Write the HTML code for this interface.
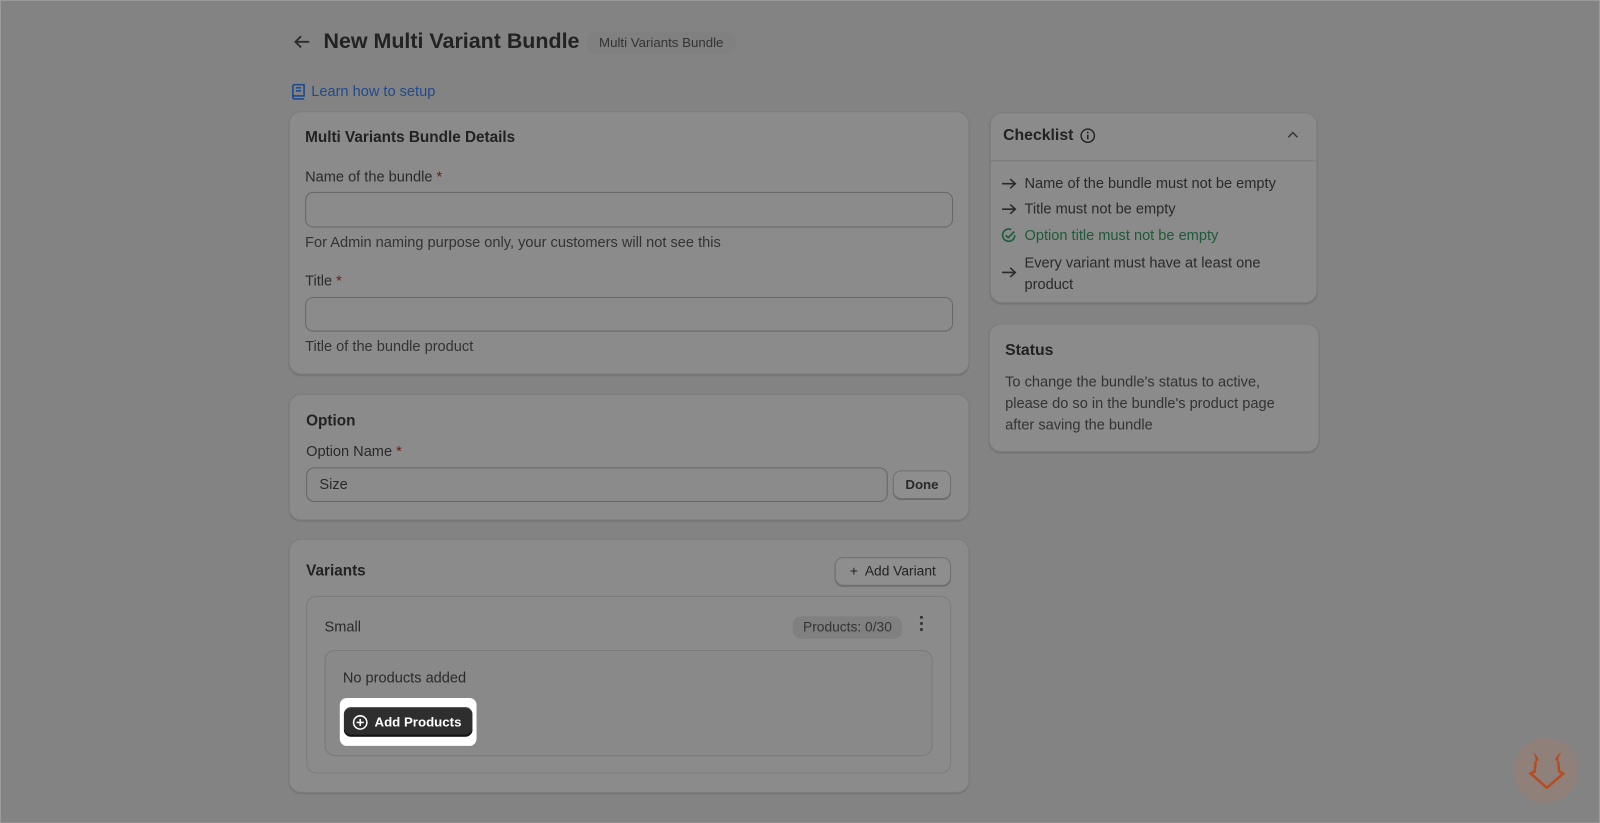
<!DOCTYPE html>
<html><head><meta charset="utf-8"><style>
html,body{margin:0;padding:0;background:#838383;width:1600px;height:823px;overflow:hidden}
#w{position:absolute;left:0;top:0;width:1568px;height:807px;transform:scale(1.02041);transform-origin:0 0;font-family:"Liberation Sans",sans-serif;color:#2a2a2a;font-size:14px}
.a{position:absolute}
.card{position:absolute;background:#8b8b8b;border:1px solid #7c7c7c;border-radius:12px;box-shadow:0 1px 1px rgba(0,0,0,.12)}
.b{font-weight:bold;color:#222}
.inp{position:absolute;border:1px solid #666;border-radius:8px;background:#8b8b8b}
.btn{position:absolute;border:1px solid #6f6f6f;border-radius:8px;background:#8e8e8e;box-shadow:0 1px 0 #6a6a6a;font-size:13px;font-weight:bold;color:#2a2a2a;text-align:center;box-sizing:border-box}
.req{color:#6b1c12}
.sec{color:#333}
</style></head><body><div id="w">
<div class="a" style="left:0;top:0;width:1566px;height:805px;border:1px solid #9a9a9a"></div>
<svg class="a" style="left:288px;top:34px" width="16" height="14" viewBox="0 0 16 14"><path d="M15 7H2M7 1.5L1.5 7 7 12.5" fill="none" stroke="#2a2a2a" stroke-width="1.8"/></svg>
<div class="a b" style="left:317px;top:29px;font-size:21px">New Multi Variant Bundle</div>
<div class="a" style="left:575px;top:31px;width:146px;height:22px;border-radius:8px;background:#808080;font-size:13px;color:#333;text-align:center;line-height:22px">Multi Variants Bundle</div>
<svg class="a" style="left:285px;top:82px" width="15" height="16" viewBox="0 0 15 16"><path d="M2 14V2.5A1.5 1.5 0 0 1 3.5 1H13v11H3.5A1.5 1.5 0 0 0 2 13.5 1.5 1.5 0 0 0 3.5 15H13M5 4h5M5 7h5" fill="none" stroke="#1f4a8c" stroke-width="1.6"/></svg>
<div class="a" style="left:305px;top:82px;color:#1f4a8c;font-size:14.3px">Learn how to setup</div>

<div class="card" style="left:283px;top:109px;width:665px;height:256px"></div>
<div class="a b" style="left:299px;top:126px;font-size:15px">Multi Variants Bundle Details</div>
<div class="a" style="left:299px;top:166px;font-size:14.3px">Name of the bundle <span class="req">*</span></div>
<div class="inp" style="left:299px;top:188px;width:633px;height:33px"></div>
<div class="a sec" style="left:299px;top:230px;font-size:14.3px">For Admin naming purpose only, your customers will not see this</div>
<div class="a" style="left:299px;top:268px;font-size:14.3px">Title <span class="req">*</span></div>
<div class="inp" style="left:299px;top:291px;width:633px;height:32px"></div>
<div class="a sec" style="left:299px;top:332px;font-size:14.3px">Title of the bundle product</div>

<div class="card" style="left:283px;top:386px;width:665px;height:122px"></div>
<div class="a b" style="left:300px;top:404px;font-size:15px">Option</div>
<div class="a" style="left:300px;top:435px;font-size:14.3px">Option Name <span class="req">*</span></div>
<div class="inp" style="left:300px;top:458px;width:568px;height:32px"></div>
<div class="a" style="left:313px;top:467px;font-size:14.3px">Size</div>
<div class="btn" style="left:875px;top:461px;width:57px;height:28px;line-height:26px">Done</div>

<div class="card" style="left:283px;top:528px;width:665px;height:247px"></div>
<div class="a b" style="left:300px;top:551px;font-size:15px">Variants</div>
<div class="btn" style="left:818px;top:546px;width:114px;height:28px;line-height:26px;font-weight:normal;color:#222;font-size:13.5px">+&nbsp; Add Variant</div>
<div class="a" style="left:300px;top:584px;width:630px;height:172px;border:1px solid #7c7c7c;border-radius:10px"></div>
<div class="a" style="left:318px;top:607px;font-size:14.3px">Small</div>
<div class="a" style="left:777px;top:604px;width:107px;height:22px;border-radius:8px;background:#808080;font-size:13.5px;color:#333;text-align:center;line-height:22px">Products: 0/30</div>
<svg class="a" style="left:900px;top:603px" width="6" height="16"><circle cx="3" cy="2" r="1.5" fill="#333"/><circle cx="3" cy="8" r="1.5" fill="#333"/><circle cx="3" cy="14" r="1.5" fill="#333"/></svg>
<div class="a" style="left:318px;top:637px;width:594px;height:102px;border:1px solid #7a7a7a;border-radius:10px;background:#898989"></div>
<div class="a" style="left:336px;top:657px;font-size:14.3px">No products added</div>
<div class="a" style="left:333px;top:684px;width:134px;height:47px;background:#fff;border-radius:7px"></div>
<div class="a" style="left:337px;top:693px;width:126px;height:29px;background:#2e2e2e;border-radius:7px;box-shadow:inset 0 -2px 0 #111,inset 0 1px 0 #555"></div>
<svg class="a" style="left:345px;top:700px" width="16" height="16" viewBox="0 0 16 16"><circle cx="8" cy="8" r="6.5" fill="none" stroke="#fff" stroke-width="1.5"/><path d="M8 4.5v7M4.5 8h7" stroke="#fff" stroke-width="1.5"/></svg>
<div class="a" style="left:367px;top:700px;color:#fff;font-size:13px;font-weight:bold">Add Products</div>

<div class="card" style="left:970px;top:110px;width:319px;height:185px"></div>
<div class="a b" style="left:983px;top:124px;font-size:15.5px">Checklist</div>
<svg class="a" style="left:1058px;top:125px" width="16" height="16" viewBox="0 0 16 16"><circle cx="8" cy="8" r="6.5" fill="none" stroke="#222" stroke-width="1.4"/><path d="M8 7v4.5" stroke="#222" stroke-width="1.5"/><circle cx="8" cy="4.8" r="0.9" fill="#222"/></svg>
<svg class="a" style="left:1261px;top:128px" width="12" height="8"><path d="M1.5 6.5L6 2l4.5 4.5" fill="none" stroke="#333" stroke-width="1.4"/></svg>
<div class="a" style="left:971px;top:157px;width:319px;height:1px;background:#7a7a7a"></div>
<svg class="a" style="left:981px;top:174px" width="16" height="12" viewBox="0 0 16 12"><path d="M1 6h13M9 1.5L14 6 9 10.5" fill="none" stroke="#2a2a2a" stroke-width="1.5"/></svg>
<div class="a" style="left:1004px;top:172px;font-size:14.3px">Name of the bundle must not be empty</div>
<svg class="a" style="left:981px;top:199px" width="16" height="12" viewBox="0 0 16 12"><path d="M1 6h13M9 1.5L14 6 9 10.5" fill="none" stroke="#2a2a2a" stroke-width="1.5"/></svg>
<div class="a" style="left:1004px;top:197px;font-size:14.3px">Title must not be empty</div>
<svg class="a" style="left:980px;top:222px" width="17" height="17" viewBox="0 0 17 17"><path d="M14.5 8.5A6 6 0 1 1 11 3" fill="none" stroke="#1e5a37" stroke-width="1.6"/><path d="M5.5 8.5l2.5 2.5 6-6" fill="none" stroke="#1e5a37" stroke-width="1.6"/></svg>
<div class="a" style="left:1004px;top:223px;color:#1e5a37;font-size:14.3px">Option title must not be empty</div>
<svg class="a" style="left:981px;top:261px" width="16" height="12" viewBox="0 0 16 12"><path d="M1 6h13M9 1.5L14 6 9 10.5" fill="none" stroke="#2a2a2a" stroke-width="1.5"/></svg>
<div class="a" style="left:1004px;top:248px;line-height:21px;font-size:14.3px">Every variant must have at least one<br>product</div>

<div class="card" style="left:969px;top:317px;width:322px;height:124px"></div>
<div class="a b" style="left:985px;top:335px;font-size:15.5px">Status</div>
<div class="a sec" style="left:985px;top:365px;line-height:21px;font-size:14.3px">To change the bundle's status to active,<br>please do so in the bundle's product page<br>after saving the bundle</div>

<div class="a" style="left:1483px;top:723px;width:64px;height:64px;border-radius:50%;background:#8f8079"></div>
<svg class="a" style="left:1496px;top:734px" width="40" height="42" viewBox="0 0 40 42"><path d="M6 3c2 3 3 6 3 9l3-1c-1-3-3-6-6-8zM34 3c-2 3-3 6-3 9l-3-1c1-3 3-6 6-8z" fill="#b84a20"/><path d="M9 12l-1 10-4 2 16 14 16-14-4-2-1-10" fill="none" stroke="#b84a20" stroke-width="2.4"/></svg>
</div></body></html>
